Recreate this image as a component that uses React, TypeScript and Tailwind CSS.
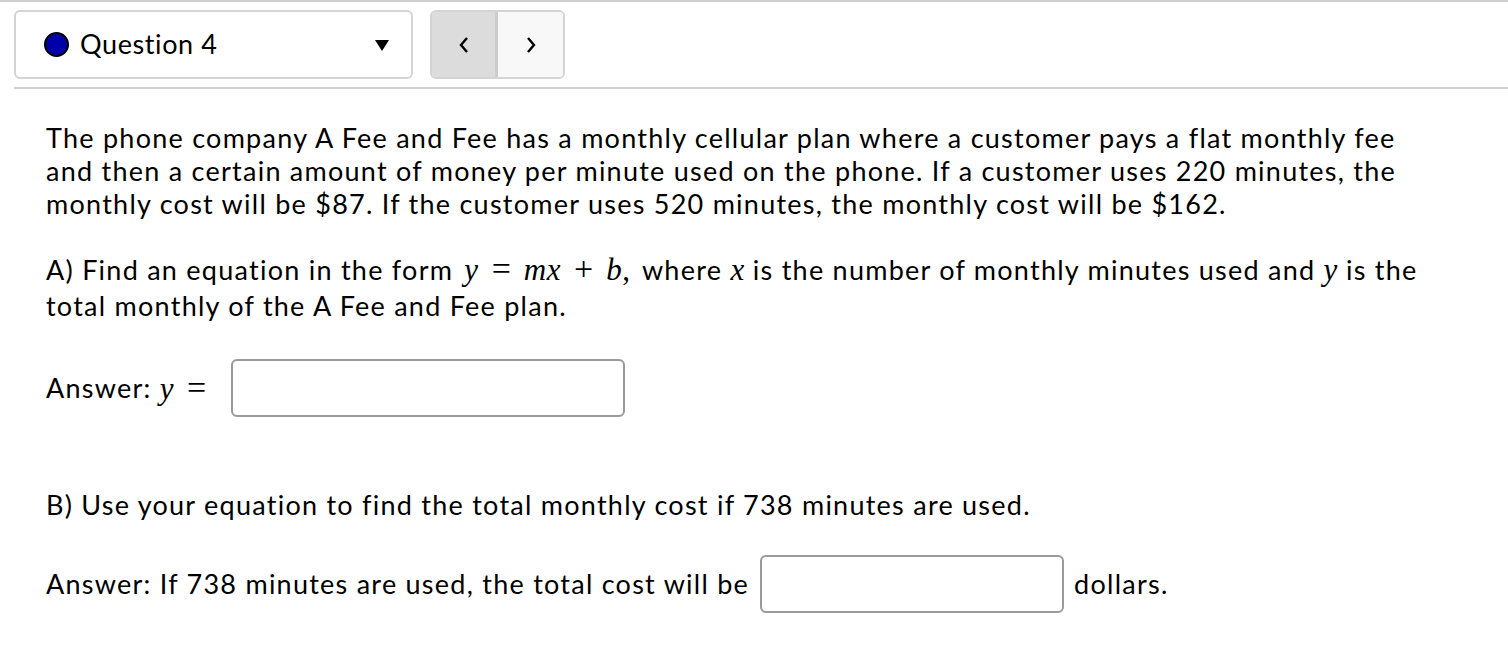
import React from "react";

function M({ children }: { children: React.ReactNode }) {
  return (
    <span className="font-['Liberation_Serif',serif] text-[31px] italic leading-none tracking-[0.5px]">{children}</span>
  );
}
function Op({ children }: { children: React.ReactNode }) {
  return (
    <span className="font-['Liberation_Serif',serif] text-[34px] not-italic leading-none tracking-normal mx-[13px]">{children}</span>
  );
}

export default function App() {
  return (
    <div className="min-h-[654px] bg-white font-['Lato',sans-serif] text-[27px] tracking-[1.25px] text-black overflow-hidden">
      <div className="h-[2px] bg-[#d0d0d0]" />
      <div className="flex pl-[14px] pt-[8px] gap-[17px]">
        <div className="w-[399px] h-[69px] border-2 border-[#d4d4d4] rounded-[6px] flex items-center pl-[28px] pr-[22px]">
          <span className="w-[25px] h-[25px] rounded-full bg-[#0000a8] border-[2px] border-black" />
          <span className="ml-[11px] flex-1 tracking-[0.6px]">Question 4</span>
          <svg width="14" height="12" viewBox="0 0 14 12">
            <polygon points="0,1 14,1 7,12" fill="#000" />
          </svg>
        </div>
        <div className="w-[135px] h-[69px] border-2 border-[#d4d4d4] rounded-[6px] flex overflow-hidden">
          <div className="w-[66px] bg-[#dcdcdc] flex items-center justify-center border-r-[3px] border-[#cccccc]">
            <svg width="12" height="18" viewBox="0 0 12 18">
              <polyline points="9,2 3,9 9,16" fill="none" stroke="#000" strokeWidth="2.4" />
            </svg>
          </div>
          <div className="flex-1 bg-[#f8f8f8] flex items-center justify-center">
            <svg width="12" height="18" viewBox="0 0 12 18">
              <polyline points="3,2 9,9 3,16" fill="none" stroke="#000" strokeWidth="2.4" />
            </svg>
          </div>
        </div>
      </div>
      <div className="ml-[14px] mt-[8px] h-[2px] bg-[#d0d0d0]" />
      <div className="pl-[46px] pt-[32px]">
        <p className="leading-[33px] whitespace-nowrap">
          The phone company A Fee and Fee has a monthly cellular plan where a customer pays a flat monthly fee
          <br />
          and then a certain amount of money per minute used on the phone. If a customer uses 220 minutes, the
          <br />
          monthly cost will be $87. If the customer uses 520 minutes, the monthly cost will be $162.
        </p>
        <p className="leading-[36px] mt-[32px] whitespace-nowrap">
          A) Find an equation in the form <span className="ml-[3px]" />
          <M>y</M>
          <Op>=</Op>
          <M>mx</M>
          <Op>+</Op>
          <M>b</M>
          <span className="font-['Liberation_Serif',serif] text-[31px] tracking-normal">,</span>
          <span className="ml-[12px]">where </span>
          <M>x</M> is the number of monthly minutes used and <M>y</M> is the
          <br />
          total monthly of the A Fee and Fee plan.
        </p>
        <div className="flex items-center mt-[35px]">
          <span>Answer:&nbsp;</span>
          <M>y</M>
          <Op>=</Op>
          <input className="ml-[12px] w-[394px] h-[58px] border-2 border-[#9a9a9a] rounded-[6px] outline-none" />
        </div>
        <p className="mt-[71px] leading-[33px] whitespace-nowrap">B) Use your equation to find the total monthly cost if 738 minutes are used.</p>
        <div className="flex items-center mt-[34px] whitespace-nowrap">
          <span>Answer: If 738 minutes are used, the total cost will be</span>
          <input className="ml-[11px] w-[304px] h-[58px] border-2 border-[#9a9a9a] rounded-[6px] outline-none" />
          <span className="ml-[10px]">dollars.</span>
        </div>
        <div className="flex items-center mt-[36px] whitespace-nowrap">
          <span>Question Help:</span>
          <svg className="ml-[22px]" width="30" height="22" viewBox="0 0 30 22">
            <rect x="2" y="2" width="26" height="18" rx="2" fill="none" stroke="#000" strokeWidth="2" />
          </svg>
          <span className="ml-[8px] text-[#1f2fa8]">Video</span>
          <svg className="ml-[26px]" width="24" height="24" viewBox="0 0 24 24">
            <circle cx="12" cy="12" r="10" fill="none" stroke="#000" strokeWidth="2" />
          </svg>
          <span className="ml-[12px] text-[#1f2fa8]">Post to forum</span>
        </div>
      </div>
    </div>
  );
}
